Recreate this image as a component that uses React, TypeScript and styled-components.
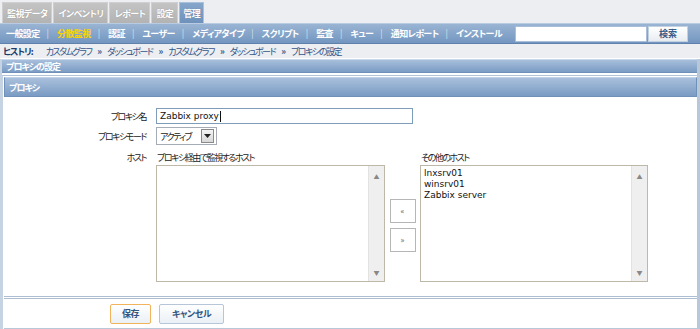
import React from "react"
import styled, { createGlobalStyle } from "styled-components"

const GlobalStyle = createGlobalStyle`
  html, body {
    margin: 0;
    padding: 0;
    background: #ffffff;
  }
  body {
    font-family: "Noto Sans CJK JP", "DejaVu Sans", sans-serif;
    font-size: 9px;
    letter-spacing: -1.5px;
    font-feature-settings: "palt" 1;
    color: #222;
  }
`

const Page = styled.div`
  width: 700px;
  height: 329px;
  overflow: hidden;
  background: #ffffff;
`

const TopArea = styled.div`
  background: #eceef1;
`

const RedMark = styled.div`
  position: absolute;
  top: -2px;
  left: 29px;
  width: 66px;
  height: 2px;
  background: #e04848;
`

const TabRow = styled.div`
  position: relative;
  display: flex;
  gap: 1px;
  padding: 2px 0 0 2px;
  height: 21px;
`

const Tab = styled.div<{ $active?: boolean }>`
  height: 21px;
  box-sizing: border-box;
  padding: 0 ${p => (p.$active ? "3px" : "4px")};
  display: flex;
  align-items: center;
  font-weight: 700;
  letter-spacing: -0.6px;
  color: #ffffff;
  text-shadow: 0 0 1px rgba(0, 0, 0, 0.25);
  background: ${p => (p.$active ? "linear-gradient(#86a5ca, #6e92bd)" : "linear-gradient(#c4c4c4, #b3b3b3)")};
  border: 1px solid ${p => (p.$active ? "#a9c1dc" : "#cfcfcf")};
  border-bottom: none;
`

const NavBar = styled.div`
  height: 19px;
  display: flex;
  align-items: center;
  padding-left: 6px;
  background: linear-gradient(#9ab4d3, #7396c0);
  border-top: 1px solid #b9cbe0;
  border-bottom: 1px solid #5f82ad;
`

const NavItem = styled.span<{ $current?: boolean }>`
  font-weight: 700;
  letter-spacing: -0.6px;
  color: ${p => (p.$current ? "#ffd200" : "#ffffff")};
  white-space: nowrap;
`

const NavSep = styled.span`
  color: #d4e0ee;
  margin: 0 8px 0 7px;
  letter-spacing: 0;
`

const SearchBox = styled.div`
  margin-left: auto;
  margin-right: 12px;
  display: flex;
  gap: 1px;
`

const SearchInput = styled.div`
  width: 130px;
  height: 14px;
  background: #ffffff;
  border: 1px solid #a9bfd9;
`

const SearchButton = styled.div`
  width: 38px;
  height: 14px;
  border: 1px solid #c3d0df;
  background: linear-gradient(#ffffff, #e8ecf1);
  color: #3a5c88;
  font-weight: 700;
  letter-spacing: 0;
  display: flex;
  align-items: center;
  justify-content: center;
`

const History = styled.div`
  height: 14px;
  display: flex;
  align-items: center;
  padding-left: 3px;
  color: #34558a;
`

const HistoryLabel = styled.span`
  font-weight: 700;
  letter-spacing: -1px;
  color: #1c3b6b;
  margin-right: 13px;
`

const Arrow = styled.span`
  margin: 0 6px;
  font-size: 9px;
  font-weight: 700;
  letter-spacing: -1px;
  color: #34558a;
`

const Frame = styled.div`
  margin-top: 1px;
  border-left: 2px solid #c6d3e2;
  border-right: 3px solid #b9c8d9;
  height: 271px;
  display: flex;
  flex-direction: column;
`

const TitleBar = styled.div`
  height: 12px;
  display: flex;
  align-items: center;
  padding-left: 4px;
  font-weight: 700;
  letter-spacing: -1px;
  color: #ffffff;
  background: linear-gradient(#a7bedb, #7b9cc4);
  border-top: 1px solid #c9d8ea;
  border-bottom: 1px solid #6f90b8;
`

const Panel = styled.div`
  margin-top: 2px;
  border-top: 1px solid #b3c4d8;
  border-left: 1px solid #c6d3e2;
  padding: 1px 0 0 1px;
  flex: 1;
  display: flex;
  flex-direction: column;
`

const PanelHeader = styled.div`
  height: 18px;
  display: flex;
  align-items: center;
  padding-left: 4px;
  font-weight: 700;
  letter-spacing: -1px;
  color: #ffffff;
  background: linear-gradient(#a9c0dc, #7a9bc3);
  border: 1px solid #6f90b8;
  border-top-color: #c2d3e7;
`

const FormGrid = styled.div`
  display: grid;
  grid-template-columns: 142px auto;
  column-gap: 10px;
  row-gap: 3px;
  padding-top: 11px;
  align-items: center;
`

const Label = styled.div<{ $top?: boolean }>`
  text-align: right;
  align-self: ${p => (p.$top ? "start" : "center")};
  margin-top: ${p => (p.$top ? "3px" : "0")};
`

const TextInput = styled.div`
  width: 252px;
  height: 14px;
  border: 1px solid #7f9db9;
  display: flex;
  align-items: center;
  padding-left: 3px;
  font-family: "DejaVu Sans", sans-serif;
  font-size: 9px;
  letter-spacing: 0;
  color: #111;
`

const Caret = styled.span`
  display: inline-block;
  width: 1px;
  height: 11px;
  background: #111;
  margin-left: 1px;
`

const Select = styled.div`
  width: 56px;
  height: 16px;
  border: 1px solid #a5acb5;
  display: flex;
  align-items: center;
  justify-content: space-between;
  padding-left: 3px;
`

const SelectArrow = styled.div`
  width: 11px;
  height: 12px;
  margin-right: 2px;
  border: 1px solid #8a8a8a;
  background: linear-gradient(#f4f4f4, #d8d8d8);
  display: flex;
  align-items: center;
  justify-content: center;
`

const Hosts = styled.div`
  margin-top: 3px;
  display: grid;
  grid-template-columns: 229px 35px 228px;
  grid-template-rows: auto 117px;
  row-gap: 1px;
`

const ListTitle = styled.div`
  padding-left: 1px;
`

const ListBox = styled.div`
  border: 1px solid #bdb8a8;
  display: flex;
  background: #ffffff;
`

const ListItems = styled.div`
  flex: 1;
  padding: 2px 3px;
  font-family: "DejaVu Sans", sans-serif;
  font-size: 9px;
  letter-spacing: 0;
  line-height: 11px;
  color: #111;
`

const ScrollBar = styled.div`
  width: 15px;
  background: #efefef;
  border-left: 1px solid #e2e2e2;
  display: flex;
  flex-direction: column;
  justify-content: space-between;
  align-items: center;
  padding: 6px 0 4px;
  font-size: 6px;
  letter-spacing: 0;
  color: #888;
`

const MoveButtons = styled.div`
  display: flex;
  flex-direction: column;
  align-items: center;
  justify-content: center;
  gap: 5px;
  padding-top: 3px;
`

const MoveButton = styled.div`
  width: 24px;
  height: 22px;
  border: 1px solid #b6b6b6;
  background: #ffffff;
  display: flex;
  align-items: center;
  justify-content: center;
  font-size: 8px;
  letter-spacing: 0;
  color: #555;
`

const Footer = styled.div`
  margin-top: auto;
  border-top: 3px double #aebfd3;
  height: 29px;
  display: flex;
  align-items: center;
  gap: 8px;
  padding-left: 106px;
  border-bottom: 2px solid #b9c8d9;
`

const FooterButton = styled.div<{ $primary?: boolean }>`
  height: 18px;
  padding: 0 ${p => (p.$primary ? "11px" : "12px")};
  display: flex;
  align-items: center;
  border: 1px solid ${p => (p.$primary ? "#f2b45a" : "#b7c5d8")};
  border-radius: 2px;
  background: linear-gradient(#ffffff, #eaf0f6);
  color: #35557f;
  font-weight: 700;
  letter-spacing: -0.5px;
`

const tabs = ["監視データ", "インベントリ", "レポート", "設定", "管理"]
const navItems = ["一般設定", "分散監視", "認証", "ユーザー", "メディアタイプ", "スクリプト", "監査", "キュー", "通知レポート", "インストール"]
const history = ["カスタムグラフ", "ダッシュボード", "カスタムグラフ", "ダッシュボード", "プロキシの設定"]

export default function App() {
  return (
    <Page>
      <GlobalStyle />
      <TopArea>
        <TabRow>
          <RedMark />
          {tabs.map(t => (
            <Tab key={t} $active={t === "管理"}>{t}</Tab>
          ))}
        </TabRow>
        <NavBar>
          {navItems.map((n, i) => (
            <React.Fragment key={n}>
              {i > 0 && <NavSep>|</NavSep>}
              <NavItem $current={n === "分散監視"}>{n}</NavItem>
            </React.Fragment>
          ))}
          <SearchBox>
            <SearchInput />
            <SearchButton>検索</SearchButton>
          </SearchBox>
        </NavBar>
        <History>
          <HistoryLabel>ヒストリ:</HistoryLabel>
          {history.map((h, i) => (
            <React.Fragment key={i}>
              {i > 0 && <Arrow>»</Arrow>}
              <span>{h}</span>
            </React.Fragment>
          ))}
        </History>
      </TopArea>
      <Frame>
        <TitleBar>プロキシの設定</TitleBar>
        <Panel>
          <PanelHeader>プロキシ</PanelHeader>
          <FormGrid>
            <Label>プロキシ名</Label>
            <TextInput>Zabbix proxy<Caret /></TextInput>
            <Label>プロキシモード</Label>
            <Select>
              アクティブ
              <SelectArrow>
                <svg width="7" height="4" viewBox="0 0 7 4">
                  <path d="M0 0 L7 0 L3.5 4 Z" fill="#222" />
                </svg>
              </SelectArrow>
            </Select>
            <Label $top>ホスト</Label>
            <Hosts>
              <ListTitle>プロキシ経由で監視するホスト</ListTitle>
              <div />
              <ListTitle>その他のホスト</ListTitle>
              <ListBox>
                <ListItems />
                <ScrollBar><span>▲</span><span>▼</span></ScrollBar>
              </ListBox>
              <MoveButtons>
                <MoveButton>«</MoveButton>
                <MoveButton>»</MoveButton>
              </MoveButtons>
              <ListBox>
                <ListItems>
                  <div>lnxsrv01</div>
                  <div>winsrv01</div>
                  <div>Zabbix server</div>
                </ListItems>
                <ScrollBar><span>▲</span><span>▼</span></ScrollBar>
              </ListBox>
            </Hosts>
          </FormGrid>
          <Footer>
            <FooterButton $primary>保存</FooterButton>
            <FooterButton>キャンセル</FooterButton>
          </Footer>
        </Panel>
      </Frame>
    </Page>
  )
}
